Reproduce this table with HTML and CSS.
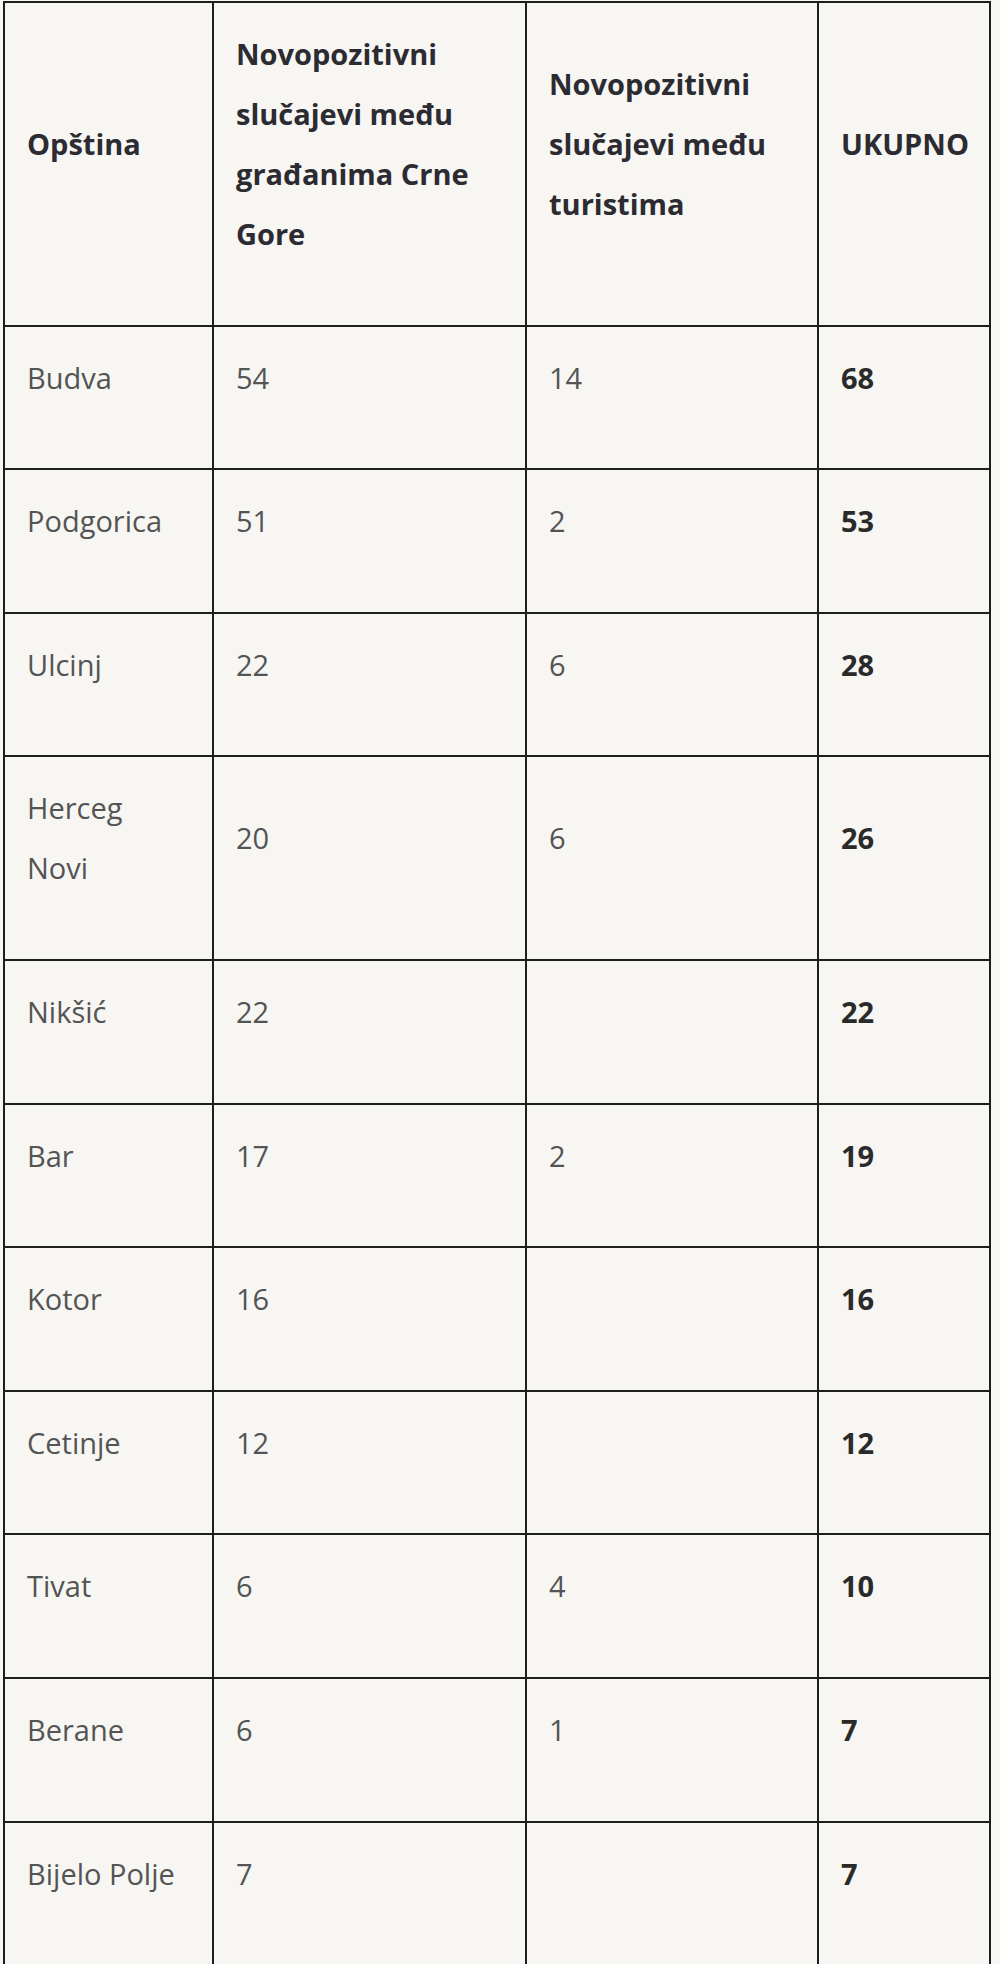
FILE: index.html
```html
<!DOCTYPE html>
<html lang="sr">
<head>
<meta charset="utf-8">
<title>Novopozitivni slučajevi</title>
<link rel="stylesheet" href="styles.css">
</head>
<body>
<table class="cases">
  <colgroup>
    <col class="c1"><col class="c2"><col class="c3"><col class="c4">
  </colgroup>
  <thead>
    <tr>
      <th>Opština</th>
      <th>Novopozitivni slučajevi među građanima Crne Gore</th>
      <th>Novopozitivni slučajevi među turistima</th>
      <th>UKUPNO</th>
    </tr>
  </thead>
  <tbody>
    <tr><td>Budva</td><td>54</td><td>14</td><td class="total">68</td></tr>
    <tr><td>Podgorica</td><td>51</td><td>2</td><td class="total">53</td></tr>
    <tr><td>Ulcinj</td><td>22</td><td>6</td><td class="total">28</td></tr>
    <tr><td>Herceg Novi</td><td>20</td><td>6</td><td class="total">26</td></tr>
    <tr><td>Nikšić</td><td>22</td><td></td><td class="total">22</td></tr>
    <tr><td>Bar</td><td>17</td><td>2</td><td class="total">19</td></tr>
    <tr><td>Kotor</td><td>16</td><td></td><td class="total">16</td></tr>
    <tr><td>Cetinje</td><td>12</td><td></td><td class="total">12</td></tr>
    <tr><td>Tivat</td><td>6</td><td>4</td><td class="total">10</td></tr>
    <tr><td>Berane</td><td>6</td><td>1</td><td class="total">7</td></tr>
    <tr><td>Bijelo Polje</td><td>7</td><td></td><td class="total">7</td></tr>
  </tbody>
</table>
</body>
</html>
```
FILE: styles.css
```css
html, body {
  margin: 0;
  padding: 0;
  background: #f7f6f3;
}

body {
  font-family: "Open Sans", "Noto Sans", "DejaVu Sans", sans-serif;
  font-size: 29px;
  line-height: 60px;
  color: #4d4d4d;
}

.cases {
  border-collapse: collapse;
  table-layout: fixed;
  width: 988px;
  margin: 1px 0 0 3px;
  background: #f7f6f3;
}

.c1 { width: 209px; }
.c2 { width: 313px; }
.c3 { width: 292px; }
.c4 { width: 172px; }

.cases th,
.cases td {
  border: 2px solid #1e1e1e;
  padding: 21px 30px 60.6px 22px;
  vertical-align: middle;
  text-align: left;
}

.cases th {
  font-weight: 700;
  color: #2c2b31;
}

.cases td {
  font-weight: 400;
  color: #545454;
}

.cases td.total {
  font-weight: 700;
  color: #2a2a2a;
}
```
